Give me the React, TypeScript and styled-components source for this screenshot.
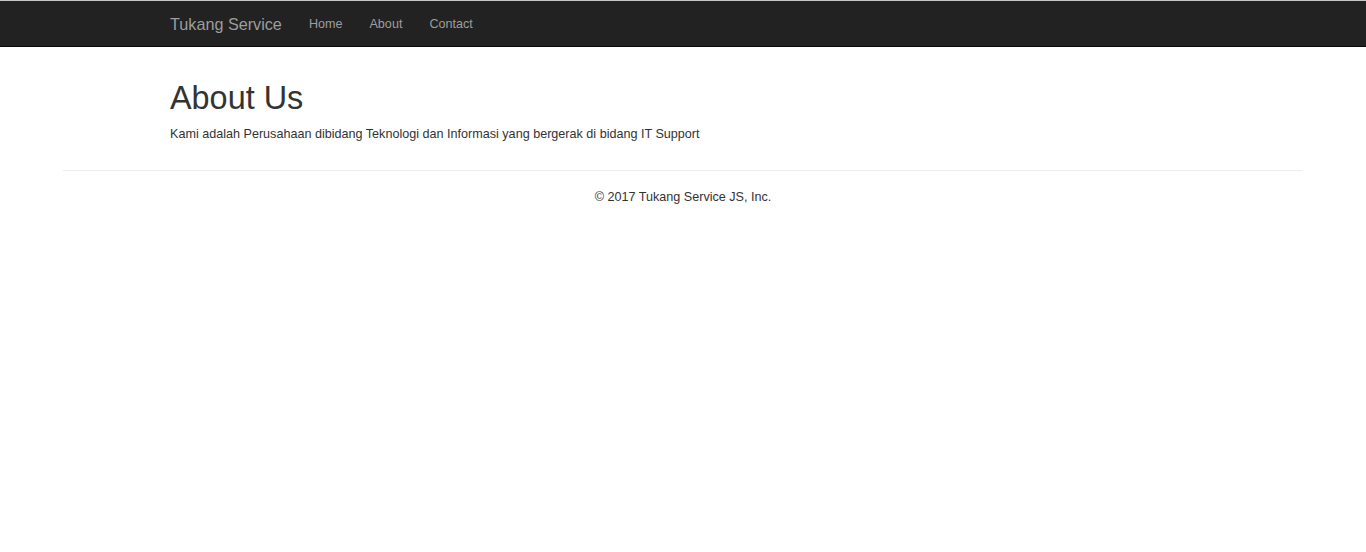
import React from 'react';
import styled, { createGlobalStyle } from 'styled-components';

const GlobalStyle = createGlobalStyle`
  * {
    box-sizing: border-box;
  }
  body {
    margin: 0;
    background: #fff;
    color: #333;
    font-family: 'Liberation Sans', Arial, Helvetica, sans-serif;
    font-size: 12.6px;
    line-height: 18px;
  }
`;

const Navbar = styled.nav`
  background-color: #222;
  border-top: 1px solid #c6c6c6;
  border-bottom: 1px solid #080808;
`;

const Container = styled.div`
  width: 1053px;
  margin: 0 auto;
  padding: 0 13.5px;
`;

const NavInner = styled(Container)`
  display: flex;
  align-items: center;
  height: 45px;
`;

const Brand = styled.a`
  font-size: 16.2px;
  line-height: 18px;
  color: #9d9d9d;
  text-decoration: none;
  padding: 13.5px 13.5px 13.5px 0;
`;

const NavList = styled.ul`
  display: flex;
  list-style: none;
  margin: 0;
  padding: 0;
`;

const NavLink = styled.a`
  display: block;
  padding: 13.5px;
  font-size: 12.6px;
  line-height: 18px;
  color: #9d9d9d;
  text-decoration: none;
`;

const Main = styled(Container)`
  padding-top: 34px;
  padding-bottom: 10px;
`;

const Title = styled.h1`
  margin: 0 0 8px;
  font-size: 32.4px;
  line-height: 1.1;
  font-weight: 500;
  color: #333;
`;

const Lead = styled.p`
  margin: 0;
`;

const Divider = styled.hr`
  margin: 17.5px 63px 0;
  border: 0;
  border-top: 1px solid #eee;
`;

const Footer = styled.footer`
  padding-top: 17px;
  text-align: center;
`;

const links = ['Home', 'About', 'Contact'];

const App = () => {
  return (
    <>
      <GlobalStyle />
      <Navbar>
        <NavInner>
          <Brand href="#">Tukang Service</Brand>
          <NavList>
            {links.map((link) => (
              <li key={link}>
                <NavLink href="#">{link}</NavLink>
              </li>
            ))}
          </NavList>
        </NavInner>
      </Navbar>
      <Main>
        <Title>About Us</Title>
        <Lead>
          Kami adalah Perusahaan dibidang Teknologi dan Informasi yang bergerak
          di bidang IT Support
        </Lead>
      </Main>
      <Divider />
      <Footer>© 2017 Tukang Service JS, Inc.</Footer>
    </>
  );
};

export default App;
